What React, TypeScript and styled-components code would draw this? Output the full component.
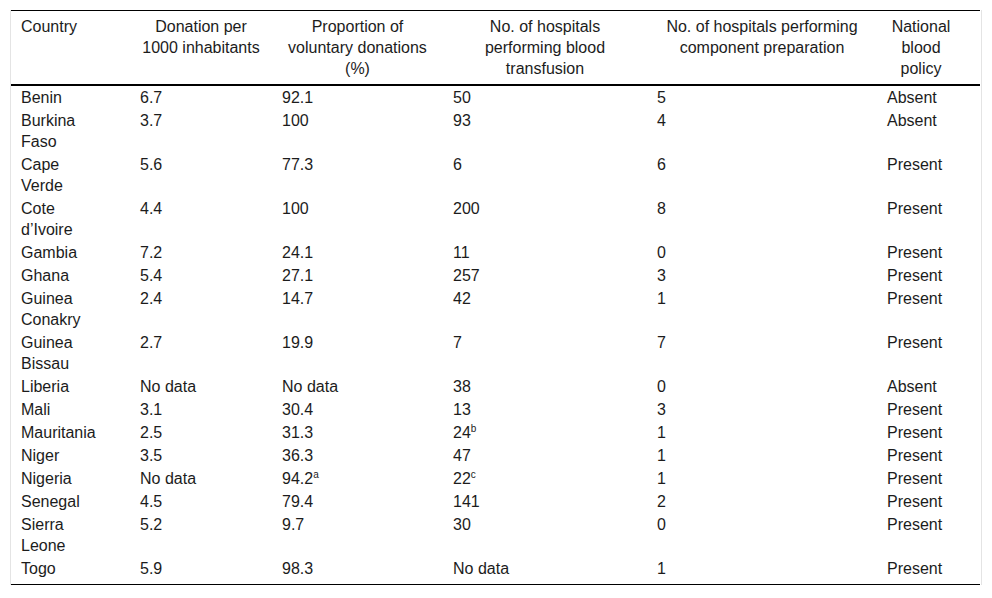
import React from "react";
import styled, { createGlobalStyle } from "styled-components";

const Global = createGlobalStyle`
  html, body { margin: 0; padding: 0; background: #ffffff; }
  body { font-family: "Liberation Sans", Arial, sans-serif; color: #1c1c1c; }
`;

const Frame = styled.div`
  margin: 10px 0 0 10px;
  width: 970px;
  border-left: 1px solid #e4e4e4;
  border-right: 1px solid #e4e4e4;
`;

const Table = styled.table`
  width: 969px;
  table-layout: fixed;
  border-collapse: collapse;
  font-size: 16px;
  line-height: 21px;
  border-top: 1px solid #000;
  border-bottom: 1px solid #000;

  td {
    padding: 1px 10px;
    vertical-align: top;
  }
  td:first-child { padding-right: 27px; }
  tbody tr:last-child td { padding-bottom: 5px; }

  th {
    padding: 5px 4px;
    vertical-align: top;
  }
  th:first-child { padding-left: 10px; }
  th:last-child { padding-right: 19px; }
`;

const HeadRow = styled.tr`
  border-bottom: 2px solid #000;
`;

const Th = styled.th<{ $left?: boolean }>`
  font-weight: normal;
  white-space: nowrap;
  text-align: ${(p) => (p.$left ? "left" : "center")};
`;

const Td = styled.td`
  text-align: left;
`;

const Sup = styled.sup`
  font-size: 10px;
  line-height: 0;
  vertical-align: 6px;
`;

type Row = [string, string, React.ReactNode, React.ReactNode, string, string];

const rows: Row[] = [
  ["Benin", "6.7", "92.1", "50", "5", "Absent"],
  ["Burkina Faso", "3.7", "100", "93", "4", "Absent"],
  ["Cape Verde", "5.6", "77.3", "6", "6", "Present"],
  ["Cote d\u2019Ivoire", "4.4", "100", "200", "8", "Present"],
  ["Gambia", "7.2", "24.1", "11", "0", "Present"],
  ["Ghana", "5.4", "27.1", "257", "3", "Present"],
  ["Guinea Conakry", "2.4", "14.7", "42", "1", "Present"],
  ["Guinea Bissau", "2.7", "19.9", "7", "7", "Present"],
  ["Liberia", "No data", "No data", "38", "0", "Absent"],
  ["Mali", "3.1", "30.4", "13", "3", "Present"],
  ["Mauritania", "2.5", "31.3", <>24<Sup>b</Sup></>, "1", "Present"],
  ["Niger", "3.5", "36.3", "47", "1", "Present"],
  ["Nigeria", "No data", <>94.2<Sup>a</Sup></>, <>22<Sup>c</Sup></>, "1", "Present"],
  ["Senegal", "4.5", "79.4", "141", "2", "Present"],
  ["Sierra Leone", "5.2", "9.7", "30", "0", "Present"],
  ["Togo", "5.9", "98.3", "No data", "1", "Present"],
];

const headers: { lines: string[]; left?: boolean }[] = [
  { lines: ["Country"], left: true },
  { lines: ["Donation per", "1000 inhabitants"] },
  { lines: ["Proportion of", "voluntary donations", "(%)"] },
  { lines: ["No. of hospitals", "performing blood", "transfusion"] },
  { lines: ["No. of hospitals performing", "component preparation"] },
  { lines: ["National", "blood", "policy"] },
];

const widths = [119, 142, 171, 204, 230, 103];

export default function App() {
  return (
    <>
      <Global />
      <Frame>
        <Table>
          <colgroup>
            {widths.map((w, i) => (
              <col key={i} style={{ width: w }} />
            ))}
          </colgroup>
          <thead>
            <HeadRow>
              {headers.map((h, i) => (
                <Th key={i} $left={h.left}>
                  {h.lines.map((l, k) => (
                    <React.Fragment key={k}>
                      {k > 0 && <br />}
                      {l}
                    </React.Fragment>
                  ))}
                </Th>
              ))}
            </HeadRow>
          </thead>
          <tbody>
            {rows.map((r, i) => (
              <tr key={i}>
                {r.map((c, j) => (
                  <Td key={j}>{c}</Td>
                ))}
              </tr>
            ))}
          </tbody>
        </Table>
      </Frame>
    </>
  );
}
